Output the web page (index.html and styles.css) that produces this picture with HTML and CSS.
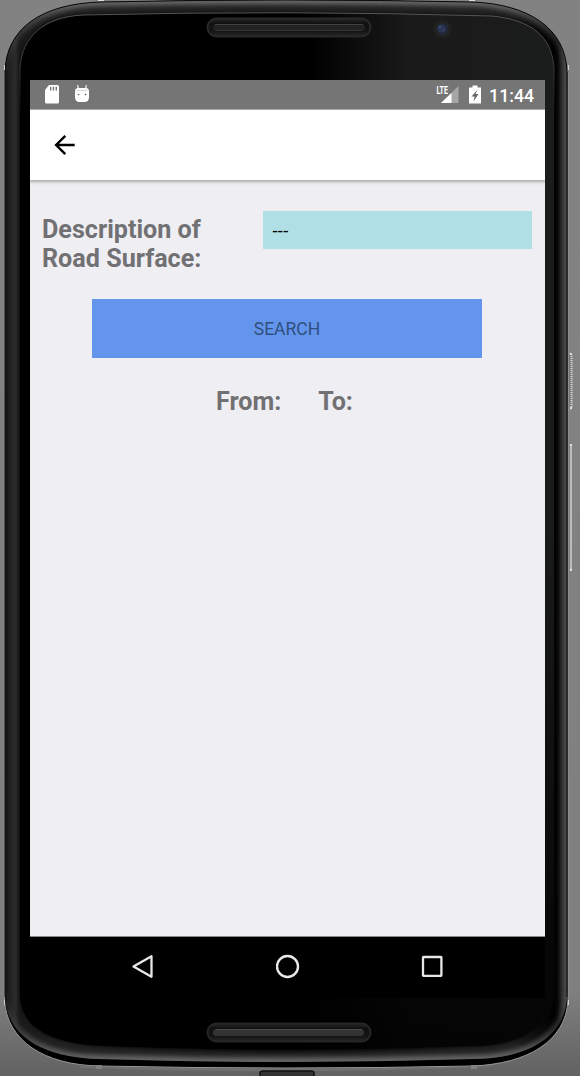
FILE: index.html
```html
<!DOCTYPE html>
<html lang="en">
<head>
<meta charset="utf-8">
<title>Road Surface Search</title>
<link rel="stylesheet" href="styles.css">
</head>
<body>
<div class="device">
  <svg class="shell" viewBox="0 0 580 1076" aria-hidden="true">
    <defs>
      <linearGradient id="side" gradientUnits="userSpaceOnUse" x1="5" y1="0" x2="568" y2="0">
        <stop offset="0" stop-color="#111"/><stop offset=".008" stop-color="#202020"/><stop offset=".018" stop-color="#2c2c2c"/><stop offset=".026" stop-color="#191919"/>
        <stop offset=".1" stop-color="#222"/><stop offset=".9" stop-color="#222"/>
        <stop offset=".975" stop-color="#000"/><stop offset=".982" stop-color="#080808"/><stop offset=".991" stop-color="#383838"/><stop offset="1" stop-color="#555"/>
      </linearGradient>
      <linearGradient id="rim" x1="0" y1="0" x2="0" y2="1">
        <stop offset="0" stop-color="#707070" stop-opacity=".9"/><stop offset=".03" stop-color="#444" stop-opacity=".6"/><stop offset=".08" stop-color="#333" stop-opacity="0"/>
        <stop offset=".93" stop-color="#333" stop-opacity="0"/><stop offset="1" stop-color="#666"/>
      </linearGradient>
      <linearGradient id="face" gradientUnits="userSpaceOnUse" x1="20" y1="0" x2="554" y2="0">
        <stop offset="0" stop-color="#000"/><stop offset=".54" stop-color="#000"/><stop offset=".73" stop-color="#191a19"/><stop offset="1" stop-color="#1b1d1c"/>
      </linearGradient>
      <linearGradient id="fade" gradientUnits="userSpaceOnUse" x1="0" y1="500" x2="0" y2="1050">
        <stop offset="0" stop-opacity="0"/><stop offset=".8" stop-opacity=".75"/><stop offset="1" stop-opacity=".85"/>
      </linearGradient>
      <linearGradient id="edge" x1="0" y1="0" x2="0" y2="1">
        <stop offset="0" stop-color="#555"/><stop offset=".06" stop-color="#333"/><stop offset=".1" stop-color="#222" stop-opacity="0"/>
      </linearGradient>
      <linearGradient id="slot" x1="0" y1="0" x2="0" y2="1">
        <stop offset="0" stop-color="#292929"/><stop offset=".3" stop-color="#101010"/><stop offset=".7" stop-color="#151515"/><stop offset="1" stop-color="#292929"/>
      </linearGradient>
      <linearGradient id="ground" x1="0" y1="0" x2="0" y2="1">
        <stop offset="0" stop-color="#828282"/><stop offset=".92" stop-color="#808080"/><stop offset="1" stop-color="#626262"/>
      </linearGradient>
      <filter id="soft" x="-10%" y="-10%" width="120%" height="120%"><feGaussianBlur stdDeviation="2.2"/></filter>
      <clipPath id="bodyclip"><path d="M5 72C6 28 42 4 100 2Q287-2 472 2C528 4 566 28 567 72V997C565 1037 528 1059 472 1059Q287 1065 100 1059C44 1058 7 1037 5 997Z"/></clipPath>
    </defs>
    <rect width="580" height="1076" fill="url(#ground)"/>
    <path d="M4.500 72V1000C7 1041 44 1065 100 1066Q287 1070 472 1066C528 1064 566 1041 568 1000V72" fill="#000" stroke="#999" stroke-width="1"/>
    <path d="M80 1066Q287 1071 492 1066L492 1067Q287 1075 80 1068Z" fill="#707070"/>
    <g clip-path="url(#bodyclip)">
      <rect width="580" height="1076" fill="url(#side)"/>
      <path d="M5 72C6 28 42 4 100 2Q287-2 472 2C528 4 566 28 567 72V997C565 1037 528 1059 472 1059Q287 1065 100 1059C44 1058 7 1037 5 997Z" fill="none" stroke="url(#rim)" stroke-width="9" filter="url(#soft)"/>
      <path d="M21 68C22 37 43 17 83 15Q287 10 492 16C532 20 552 37 554 68V996C549 1022 530 1043 480 1046Q287 1056 105 1046C55 1044 22 1030 21 996Z" fill="#000" filter="url(#soft)"/>
    </g>
    <path d="M20 68C22 37 43 17 83 15Q287 10 492 16C532 20 552 37 554 68V996C549 1022 530 1043 480 1046Q287 1053 105 1046C55 1044 22 1030 20 996Z" fill="url(#face)"/>
    <path d="M20 68C22 37 43 17 83 15Q287 10 492 16C532 20 552 37 554 68V996C549 1022 530 1043 480 1046Q287 1053 105 1046C55 1044 22 1030 20 996Z" fill="url(#fade)" stroke="url(#edge)" stroke-width="1"/>
    <path d="M5 72C6 28 42 4 100 2Q287-2 472 2C528 4 566 28 567 72V997" fill="none" stroke="#080808"/>
    <path d="M5 997V72" stroke="#111"/>
    <rect x="98" width="6" height="1" fill="#ddd"/><rect x="469" width="6" height="1" fill="#ddd"/>
    <path d="M4.500 65v5M568.500 65v5M4.500 1000v5M568.500 1000v5" stroke="#d0d0d0"/>
    <rect x="96" y="1065" width="6" height="4" fill="#808080"/><rect x="471" y="1065" width="6" height="4" fill="#808080"/>
    <path d="M260 1076v-3q0-2 3-2h48q3 0 3 2v3" fill="#333" stroke="#111" stroke-width="1.500"/>
    <path d="M569 353q3 0 3 3v51q0 3-3 3" fill="#777" stroke="#999"/>
    <path d="M571.500 356v51" stroke="#d2d2d2" stroke-width="2" stroke-dasharray="1 1"/>
    <path d="M571 445v125" stroke="#bcbcbc" stroke-width="2"/>
    <path d="M570 354h2M570 408h2M570 445h2M570 570h2" stroke="#e2e2e2" stroke-width="2"/>
    <rect x="207" y="18" width="164" height="19" rx="9.500" fill="url(#slot)"/>
    <rect x="207.500" y="18.500" width="163" height="18" rx="9" fill="none" stroke="#292929" stroke-width="2"/>
    <rect x="213" y="24" width="152" height="7" rx="3.500" fill="#222"/><path d="M215 24.500h148" stroke="#414141"/><path d="M216 30.500h146" stroke="#333"/>
    <rect x="207" y="1023" width="164" height="19" rx="9.500" fill="url(#slot)"/>
    <rect x="207.500" y="1023.500" width="163" height="18" rx="9" fill="none" stroke="#262626" stroke-width="2"/>
    <rect x="213" y="1029" width="151" height="7" rx="3.500" fill="#333"/><path d="M216 1029.500h146" stroke="#4c4c4c"/>
    <circle cx="442.500" cy="29" r="9" fill="#222221"/><circle cx="442.500" cy="29" r="6" fill="#202738"/><circle cx="441.500" cy="28.500" r="4" fill="#283450"/><circle cx="440" cy="27" r="1" fill="#48597c"/><circle cx="444" cy="30" r="1" fill="#3c4d70"/>
  </svg>
  <main class="screen">
    <header class="status">
      <svg class="sd" viewBox="0 0 16 19"><path d="M5 0h8.500q1.500 0 1.500 1.500V17q0 1.500-1.500 1.500h-11Q1 18.500 1 17V5Z" fill="#fff"/><path d="M6.700 1.800v3.600M9.500 1.800v3.600M12.300 1.800v3.600" stroke="#777" stroke-width="1.400"/></svg>
      <svg class="robot" viewBox="0 0 16 18"><path d="M3.500 0l1 4M12.500 0l-1 4" stroke="#eee" stroke-width="1.200"/><path d="M1 6.500Q1 3 4 3h8q3 0 3 3.500v5.500q0 5-4.500 5h-5Q1 17 1 12Z" fill="#fff"/><path d="M2.500 5.500h11" stroke="#ddd" stroke-width="1.500"/><circle cx="4.500" cy="9.500" r=".8" fill="#555"/><circle cx="11.500" cy="9.500" r=".8" fill="#555"/></svg>
      <svg class="signal" viewBox="0 0 23 19"><path d="M22.500 1v17H5Z" fill="#a6a6a6"/><path d="M15.500 8v10H5Z" fill="#fff"/><path d="M0 0h12.500v9H0Z" fill="#757575"/><text x="0.500" y="8.500" textLength="11.500" lengthAdjust="spacingAndGlyphs">LTE</text></svg>
      <svg class="battery" viewBox="0 0 12 19"><path d="M3.500.5h5v2H12v16H0v-16h3.500Z" fill="#fff"/><path d="M8.500 4.500L2.500 11.500h3l-1 5L9.500 9h-3Z" fill="#696969"/></svg>
      <time class="clock">11:44</time>
    </header>
    <nav class="toolbar"><svg class="back" viewBox="0 0 22 22"><path d="M20.700 11H2.300M11.300 1.800L2.100 11l9.200 9.200" fill="none" stroke="#000" stroke-width="2.400"/></svg></nav>
    <section class="content">
      <div class="field"><label class="label">Description of Road Surface:</label><div class="select">---</div></div>
      <button class="search">SEARCH</button>
      <div class="range"><span>From:</span><span>To:</span></div>
    </section>
    <footer class="navigation">
      <svg viewBox="0 0 24 26"><path d="M20.500 3.200v20.600L2.500 13.500Z" fill="none" stroke="#e8e8e8" stroke-width="2.300" stroke-linejoin="round"/></svg>
      <svg viewBox="0 0 24 26"><circle cx="11.500" cy="13.500" r="10.500" fill="none" stroke="#e8e8e8" stroke-width="2.400"/></svg>
      <svg viewBox="0 0 24 26"><rect x="3" y="4" width="18.400" height="18.800" rx=".5" fill="none" stroke="#e8e8e8" stroke-width="2.300"/></svg>
    </footer>
  </main>
</div>
</body>
</html>
```

FILE: styles.css
```css
* { box-sizing: border-box; }
body { margin: 0; font-family: Roboto, sans-serif; background: #828282; }
svg { display: block; flex: none; }
.device { position: relative; width: 580px; height: 1076px; padding: 80px 35px 78px 30px; overflow: hidden; }
.shell { position: absolute; inset: 0; width: 580px; height: 1076px; }
.screen { position: relative; display: flex; flex-direction: column; width: 515px; height: 918px; background: #efeef3; }
.status { display: flex; align-items: flex-start; height: 30px; padding: 5px 11px 0 14px; background: #757575; border-bottom: 1px solid #aaa; }
.sd { width: 16px; height: 19px; }
.robot { width: 16px; height: 18px; margin-left: 14px; }
.signal { width: 23px; height: 19px; margin-left: auto; }
.signal text { font: bold 10.500px Roboto, sans-serif; fill: #fff; }
.battery { width: 12px; height: 19px; margin-left: 10px; }
.clock { width: 45px; margin-left: 8px; padding-top: 1px; color: #fff; font-size: 17.700px; font-weight: 500; line-height: 20px; text-align: right; white-space: nowrap; }
.toolbar { height: 70px; padding: 24px; background: #fff; box-shadow: 0 1px 3px 1px #aaa; clip-path: inset(0 0 -6px 0); z-index: 1; }
.back { width: 22px; height: 22px; }
.content { flex: 1; padding: 31px 13px 0 12px; }
.field { display: flex; justify-content: space-between; height: 62px; }
.label { width: 180px; padding-top: 4px; color: #717174; font-size: 25.150px; font-weight: 700; line-height: 29.200px; }
.select { width: 269.500px; height: 38px; padding: 0 10px; background: #b0dfe5; color: #000; font-size: 18px; letter-spacing: .4px; line-height: 39px; }
.search { display: block; width: 390px; height: 59px; margin: 26px 0 0 50px; padding: 1px 0 0; border: 0; background: #6495ed; color: #304f7f; font-family: Roboto, sans-serif; font-size: 17.500px; }
.range { display: flex; gap: 37px; padding: 29px 0 0 174px; color: #717174; font-size: 25.100px; font-weight: 700; line-height: 29px; }
.navigation { display: flex; justify-content: space-between; height: 62px; padding: 16px 101px 0; background: #000; border-top: 1px solid #888; }
.navigation svg { width: 24px; height: 26px; }
```
